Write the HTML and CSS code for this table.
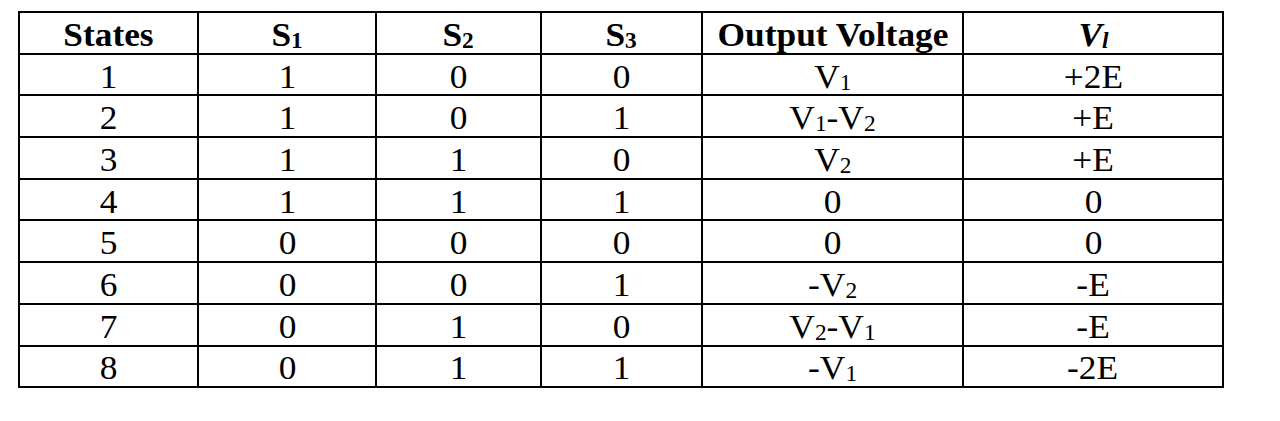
FILE: index.html
```html
<!DOCTYPE html>
<html lang="en">
<head>
    <meta charset="UTF-8">
    <title>Switching States</title>
    <link rel="stylesheet" href="styles.css">
</head>
<body>
    <table class="states">
        <colgroup>
            <col class="c-state">
            <col class="c-s1">
            <col class="c-s2">
            <col class="c-s3">
            <col class="c-out">
            <col class="c-vl">
        </colgroup>
        <thead>
            <tr>
                <th><span>States</span></th>
                <th><span>S<sub>1</sub></span></th>
                <th><span>S<sub>2</sub></span></th>
                <th><span>S<sub>3</sub></span></th>
                <th><span>Output Voltage</span></th>
                <th><span><i>V<sub>l</sub></i></span></th>
            </tr>
        </thead>
        <tbody>
            <tr><td><span>1</span></td><td><span>1</span></td><td><span>0</span></td><td><span>0</span></td><td><span>V<sub>1</sub></span></td><td><span>+2E</span></td></tr>
            <tr><td><span>2</span></td><td><span>1</span></td><td><span>0</span></td><td><span>1</span></td><td><span>V<sub>1</sub>-V<sub>2</sub></span></td><td><span>+E</span></td></tr>
            <tr><td><span>3</span></td><td><span>1</span></td><td><span>1</span></td><td><span>0</span></td><td><span>V<sub>2</sub></span></td><td><span>+E</span></td></tr>
            <tr><td><span>4</span></td><td><span>1</span></td><td><span>1</span></td><td><span>1</span></td><td><span>0</span></td><td><span>0</span></td></tr>
            <tr><td><span>5</span></td><td><span>0</span></td><td><span>0</span></td><td><span>0</span></td><td><span>0</span></td><td><span>0</span></td></tr>
            <tr><td><span>6</span></td><td><span>0</span></td><td><span>0</span></td><td><span>1</span></td><td><span>-V<sub>2</sub></span></td><td><span>-E</span></td></tr>
            <tr><td><span>7</span></td><td><span>0</span></td><td><span>1</span></td><td><span>0</span></td><td><span>V<sub>2</sub>-V<sub>1</sub></span></td><td><span>-E</span></td></tr>
            <tr><td><span>8</span></td><td><span>0</span></td><td><span>1</span></td><td><span>1</span></td><td><span>-V<sub>1</sub></span></td><td><span>-2E</span></td></tr>
        </tbody>
    </table>
</body>
</html>
```

FILE: styles.css
```css
body {
    margin: 0;
    background: #ffffff;
    color: #000000;
    font-family: "Liberation Serif", "Times New Roman", serif;
}

.states {
    margin: 11px 0 0 18px;
    width: 1205px;
    border-collapse: collapse;
    table-layout: fixed;
    border: 2px solid #000;
}

.c-state { width: 179px; }
.c-s1 { width: 178px; }
.c-s2 { width: 165px; }
.c-s3 { width: 161px; }
.c-out { width: 261px; }
.c-vl { width: 260px; }

.states tr {
    height: 41.7px;
}

.states th,
.states td {
    border: 2px solid #000;
    padding: 4px 0 0 0;
    text-align: center;
    vertical-align: middle;
    font-size: 34px;
    line-height: 34px;
}

.states th {
    font-weight: bold;
}

/* the source scan is a little wider than the font */
.states span {
    display: inline-block;
    transform: scaleX(1.04);
}

.states sub {
    font-size: 0.66em;
    line-height: 0;
    vertical-align: -0.1em;
}
```
